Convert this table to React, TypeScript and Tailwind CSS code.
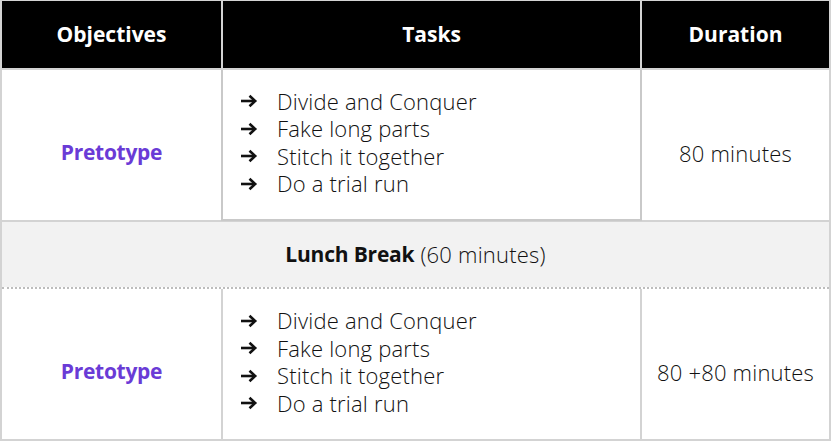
import React from "react";

const tasks = [
  "Divide and Conquer",
  "Fake long parts",
  "Stitch it together",
  "Do a trial run",
];

const font = { fontFamily: '"Open Sans", "Noto Sans", sans-serif' };

function Arrow() {
  return (
    <svg width="18" height="14" viewBox="0 0 18 14" className="mr-[19px] shrink-0">
      <path d="M1 7H15" stroke="#111" strokeWidth="2.6" />
      <path d="M9.5 1.8L15.2 7L9.5 12.2" fill="none" stroke="#111" strokeWidth="2.6" />
    </svg>
  );
}

function TaskList() {
  return (
    <ul className="flex flex-col text-[22px] font-light leading-[27.5px] tracking-[0.2px] text-[#111]">
      {tasks.map((t) => (
        <li key={t} className="flex items-center">
          <Arrow />
          <span>{t}</span>
        </li>
      ))}
    </ul>
  );
}

function SessionRow({ duration, first }: { duration: string; first?: boolean }) {
  return (
    <div className="grid grid-cols-[219px_421px_187px]">
      <div className="flex h-[150px] items-center justify-center pt-[16px] text-[21px] font-bold tracking-[-0.3px] text-[#6a3bd6]">
        Pretotype
      </div>
      <div
        className={
          first
            ? "flex h-[151px] items-center border-x-2 border-b-2 border-[#c9c9c9] pl-[17px] pb-[4px] mb-[-1px]"
            : "flex h-[150px] items-center border-x-2 border-[#d3d3d3] pl-[17px] pb-[4px]"
        }
      >
        <TaskList />
      </div>
      <div className="flex h-[150px] items-center justify-center pt-[16px] text-[22px] font-light tracking-[0.2px] text-[#111]">
        {duration}
      </div>
    </div>
  );
}

export default function App() {
  return (
    <div className="min-h-screen bg-white" style={font}>
      <div className="w-[831px] border-2 border-t-[1px] border-[#d3d3d3]">
        <div className="grid h-[67px] grid-cols-[219px_421px_187px] bg-black text-[21px] font-bold text-white">
          <div className="flex items-center justify-center">Objectives</div>
          <div className="flex items-center justify-center border-x-2 border-[#d3d3d3]">
            Tasks
          </div>
          <div className="flex items-center justify-center">Duration</div>
        </div>
        <div className="border-t-2 border-[#d3d3d3]">
          <SessionRow duration="80 minutes" first />
        </div>
        <div className="flex h-[67px] items-center justify-center border-t-2 border-[#d3d3d3] bg-[#f2f2f2] text-[22px] text-[#111]">
          <span className="font-bold text-[21px] tracking-[-0.2px]">Lunch Break</span>
          <span className="ml-[6px] font-light tracking-[0.2px]">(60 minutes)</span>
        </div>
        <div className="border-t-2 border-dotted border-[#bdbdbd]" />
        <SessionRow duration="80 +80 minutes" />
      </div>
    </div>
  );
}
